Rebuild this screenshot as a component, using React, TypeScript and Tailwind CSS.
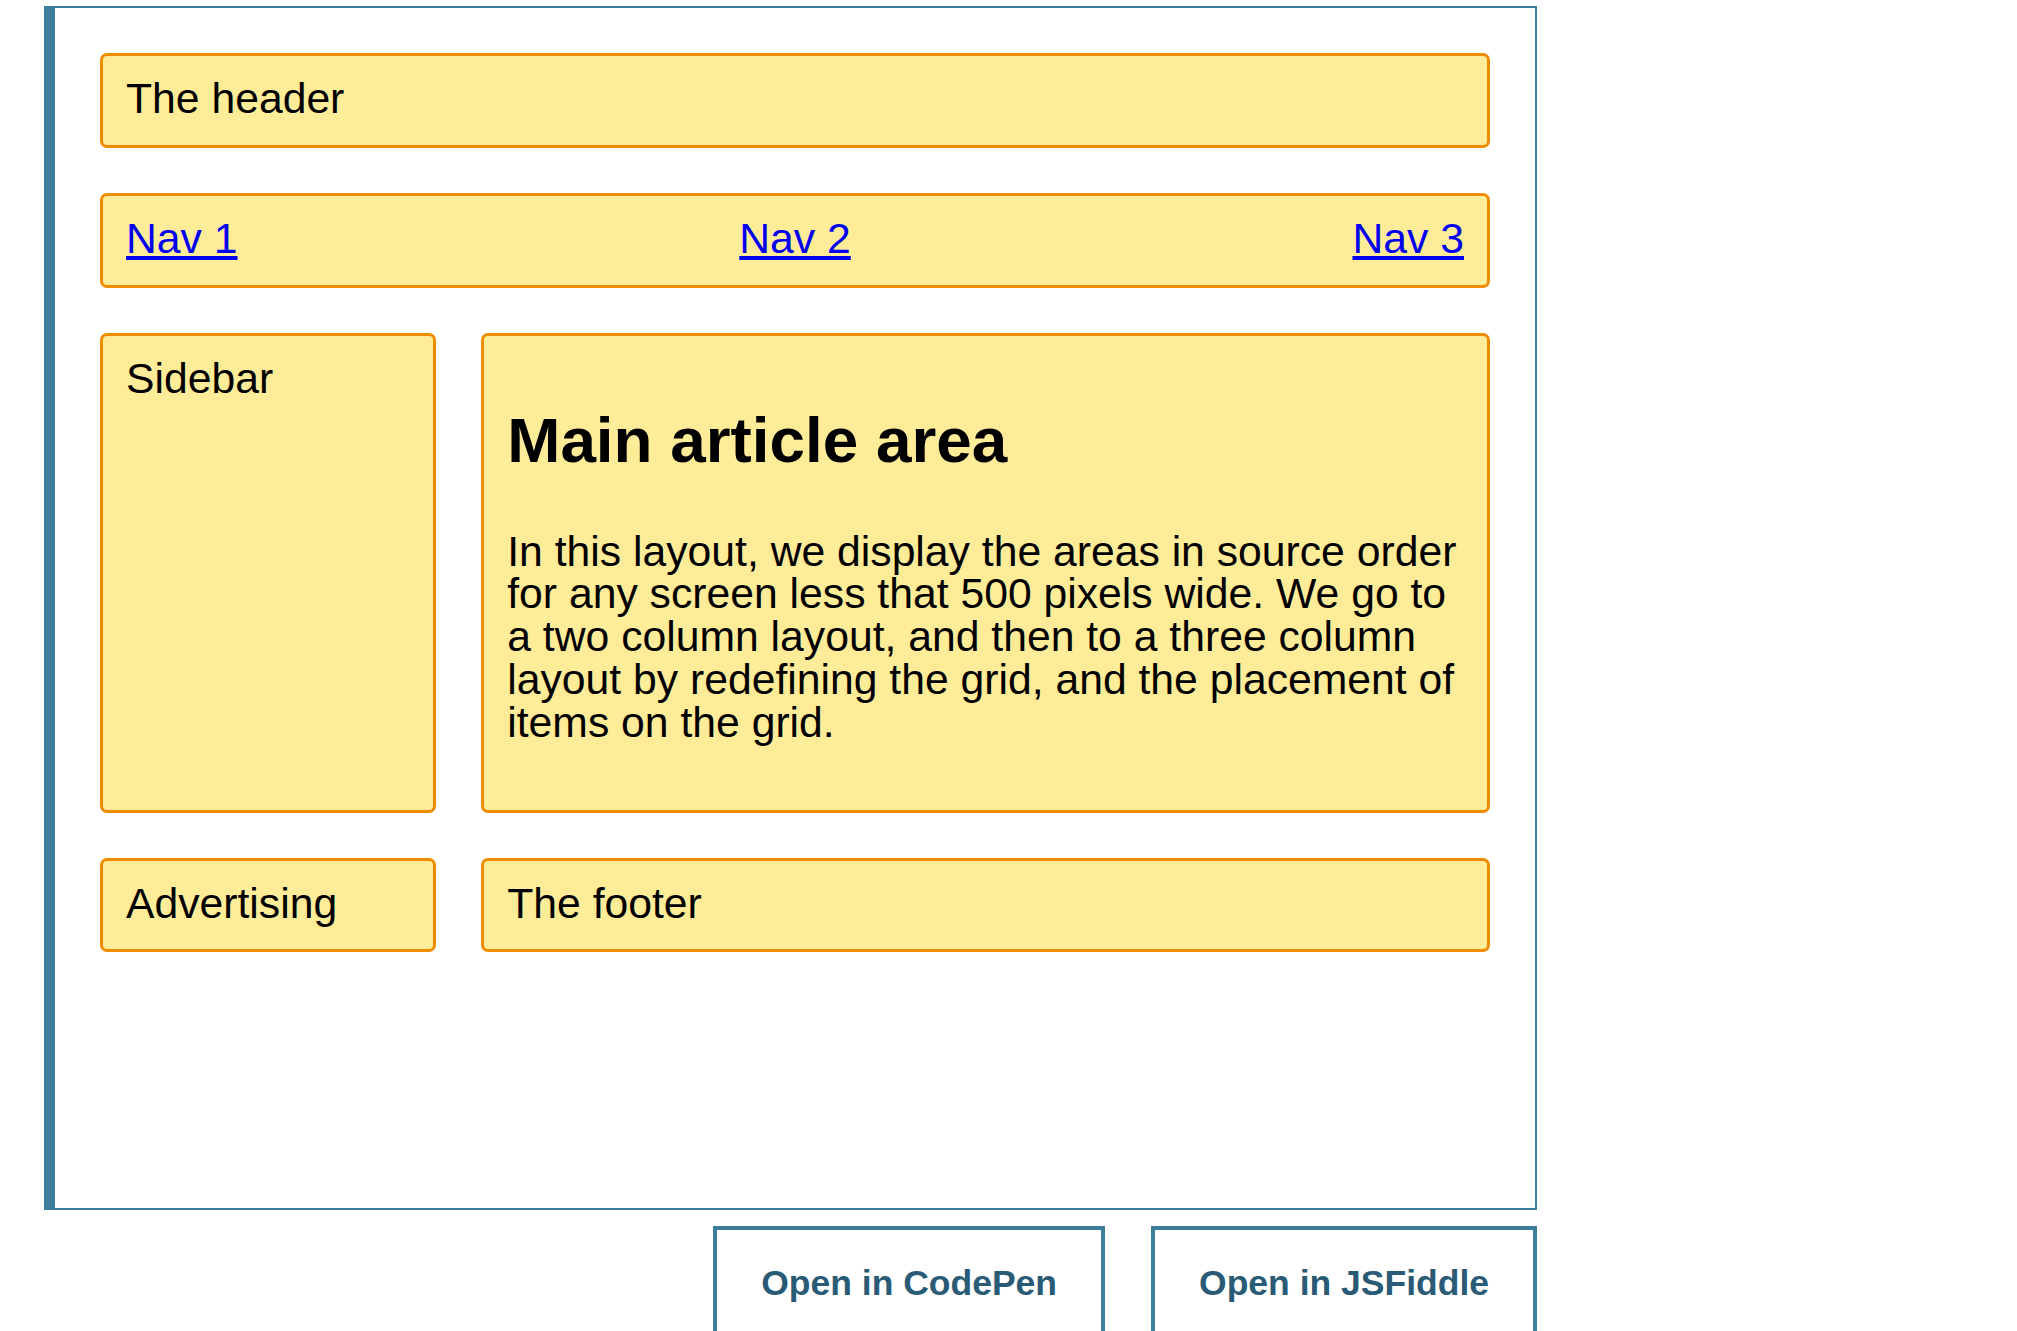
import React from "react";

const box =
  "border-[3px] border-[#f08c00] bg-[#ffec99] rounded-[7px] px-[23px] pt-[21px] pb-[25px] text-[42.7px] leading-[42.8px] text-black";

export default function App() {
  return (
    <div className="min-h-screen bg-white" style={{ fontFamily: '"Liberation Sans", Arial, Helvetica, sans-serif' }}>
      <div className="pt-[6px] pl-[44px]">
        <div className="w-[1493px] h-[1204px] border-2 border-l-[11px] border-[#3d7e9a] p-[45px]">
          <div className="grid grid-cols-[1fr_3fr] gap-x-[45px] gap-y-[45px]">
            <div className={`${box} col-span-2`}>The header</div>
            <nav className={`${box} col-span-2 flex justify-between`}>
              <a href="#" className="text-[#0000ee] underline underline-offset-[3px]">Nav 1</a>
              <a href="#" className="text-[#0000ee] underline underline-offset-[3px]">Nav 2</a>
              <a href="#" className="text-[#0000ee] underline underline-offset-[3px]">Nav 3</a>
            </nav>
            <aside className={box}>Sidebar</aside>
            <article className={box}>
              <h1 className="mt-[51px] text-[63.8px] leading-[64px] font-bold">Main article area</h1>
              <p className="mt-[58px] mb-[41px] whitespace-nowrap">
                In this layout, we display the areas in source order
                <br />
                for any screen less that 500 pixels wide. We go to
                <br />
                a two column layout, and then to a three column
                <br />
                layout by redefining the grid, and the placement of
                <br />
                items on the grid.
              </p>
            </article>
            <div className={box}>Advertising</div>
            <footer className={box}>The footer</footer>
          </div>
        </div>
        <div className="w-[1493px] mt-[16px] flex justify-end gap-[46px]">
          <button className="border-4 border-[#3d7e9a] px-[44px] pt-[33px] pb-[40px] text-[35.5px] leading-[40px] font-bold text-[#2a5b76] bg-white">
            Open in CodePen
          </button>
          <button className="border-4 border-[#3d7e9a] px-[44px] pt-[33px] pb-[40px] text-[35.5px] leading-[40px] font-bold text-[#2a5b76] bg-white">
            Open in JSFiddle
          </button>
        </div>
      </div>
    </div>
  );
}
